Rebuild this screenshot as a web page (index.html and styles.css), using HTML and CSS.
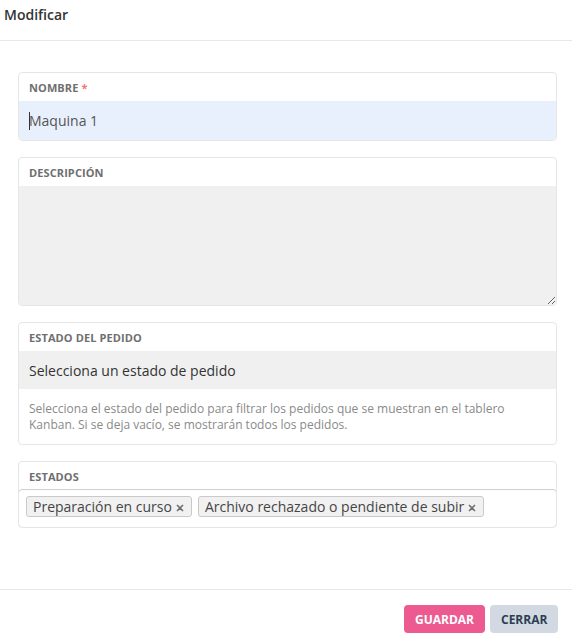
FILE: index.html
```html
<!DOCTYPE html>
<html lang="es">
<head>
<meta charset="utf-8">
<title>Modificar</title>
<link rel="stylesheet" href="styles.css">
</head>
<body>
<div class="modal">
  <header class="modal-header">
    <h1 class="modal-title">Modificar</h1>
  </header>
  <main class="modal-body">
    <section class="field">
      <label class="field-label">NOMBRE <span class="req">*</span></label>
      <div class="input input-filled"><span class="caret"></span>Maquina 1</div>
    </section>
    <section class="field">
      <label class="field-label">DESCRIPCIÓN</label>
      <textarea class="textarea"></textarea>
    </section>
    <section class="field">
      <label class="field-label">ESTADO DEL PEDIDO</label>
      <div class="select">Selecciona un estado de pedido</div>
      <p class="help">Selecciona el estado del pedido para filtrar los pedidos que se muestran en el tablero Kanban. Si se deja vacío, se mostrarán todos los pedidos.</p>
    </section>
    <section class="field">
      <label class="field-label">ESTADOS</label>
      <div class="multi">
        <span class="chip">Preparación en curso<svg class="chip-x" width="8" height="8" viewBox="0 0 8 8"><path d="M1 1L7 7M7 1L1 7" stroke="#6e6e6e" stroke-width="1.6" fill="none"/></svg></span>
        <span class="chip">Archivo rechazado o pendiente de subir<svg class="chip-x" width="8" height="8" viewBox="0 0 8 8"><path d="M1 1L7 7M7 1L1 7" stroke="#6e6e6e" stroke-width="1.6" fill="none"/></svg></span>
      </div>
    </section>
  </main>
  <footer class="modal-footer">
    <button class="btn btn-primary">GUARDAR</button>
    <button class="btn btn-secondary">CERRAR</button>
  </footer>
</div>
</body>
</html>
```
FILE: styles.css
```css
* { box-sizing: border-box; }
html, body {
  margin: 0;
  padding: 0;
  background: #ffffff;
  font-family: "Open Sans", "Noto Sans", sans-serif;
  color: #333;
}
.modal {
  width: 572px;
  height: 641px;
  display: flex;
  flex-direction: column;
}
.modal-header {
  height: 41px;
  border-bottom: 1px solid #e8e8e8;
  padding: 5px 4px 0;
}
.modal-title {
  margin: 0;
  font-size: 14px;
  font-weight: 600;
  color: #333;
  line-height: 20px;
}
.modal-body {
  flex: 1;
  padding: 31px 15px 0 18px;
  display: flex;
  flex-direction: column;
  gap: 16px;
}
.field {
  border: 1px solid #e6e6e6;
  border-radius: 4px;
  display: flex;
  flex-direction: column;
  overflow: hidden;
}
.field-label {
  height: 28px;
  padding: 0 10px;
  display: flex;
  align-items: center;
  font-size: 11px;
  font-weight: 700;
  color: #6f6f6f;
  letter-spacing: 0.1px;
}
.req {
  color: #f0776c;
  margin-left: 3px;
}
.input {
  height: 39px;
  padding: 0 10px;
  display: flex;
  align-items: center;
  font-size: 14px;
  color: #555;
}
.input-filled { background: #e9f0fd; }
.caret {
  display: inline-block;
  width: 1px;
  height: 18px;
  background: #333;
  margin-right: -1px;
}
.textarea {
  display: block;
  height: 119px;
  width: 100%;
  margin: 0;
  border: none;
  outline: none;
  background: #f0f0f0;
  resize: vertical;
  font-family: inherit;
  font-size: 14px;
  padding: 8px 10px;
}
.select {
  height: 38px;
  padding: 0 10px;
  display: flex;
  align-items: center;
  background: #f0f0f0;
  font-size: 14px;
  color: #333;
}
.help {
  margin: 0;
  padding: 12px 10px 11px;
  font-size: 12px;
  line-height: 16px;
  color: #8a8a8a;
}
.multi {
  border: 1px solid #cfcfcf;
  border-radius: 4px;
  margin: -1px -1px -1px;
  padding: 6px 6px 10px 7px;
  display: flex;
  gap: 6px;
}
.chip {
  display: inline-flex;
  align-items: center;
  height: 21px;
  padding: 0 7px 0 6px;
  background: #f1f1f1;
  border: 1px solid #c9c9c9;
  border-radius: 3px;
  font-size: 14px;
  color: #454545;
}
.chip-x {
  margin-left: 4px;
  margin-top: 3px;
}
.modal-footer {
  height: 52px;
  border-top: 1px solid #e8e8e8;
  padding: 15px 14px 0 0;
  display: flex;
  justify-content: flex-end;
  align-items: flex-start;
  gap: 5px;
}
.btn {
  height: 28px;
  border: none;
  border-radius: 4px;
  font-family: "Open Sans", sans-serif;
  font-size: 12px;
  font-weight: 700;
  padding: 0 11px;
  cursor: pointer;
}
.btn-primary {
  width: 81px;
  background: #ec5a90;
  color: #fff;
}
.btn-secondary {
  width: 68px;
  background: #d2d9e2;
  color: #2d3e52;
}
```
